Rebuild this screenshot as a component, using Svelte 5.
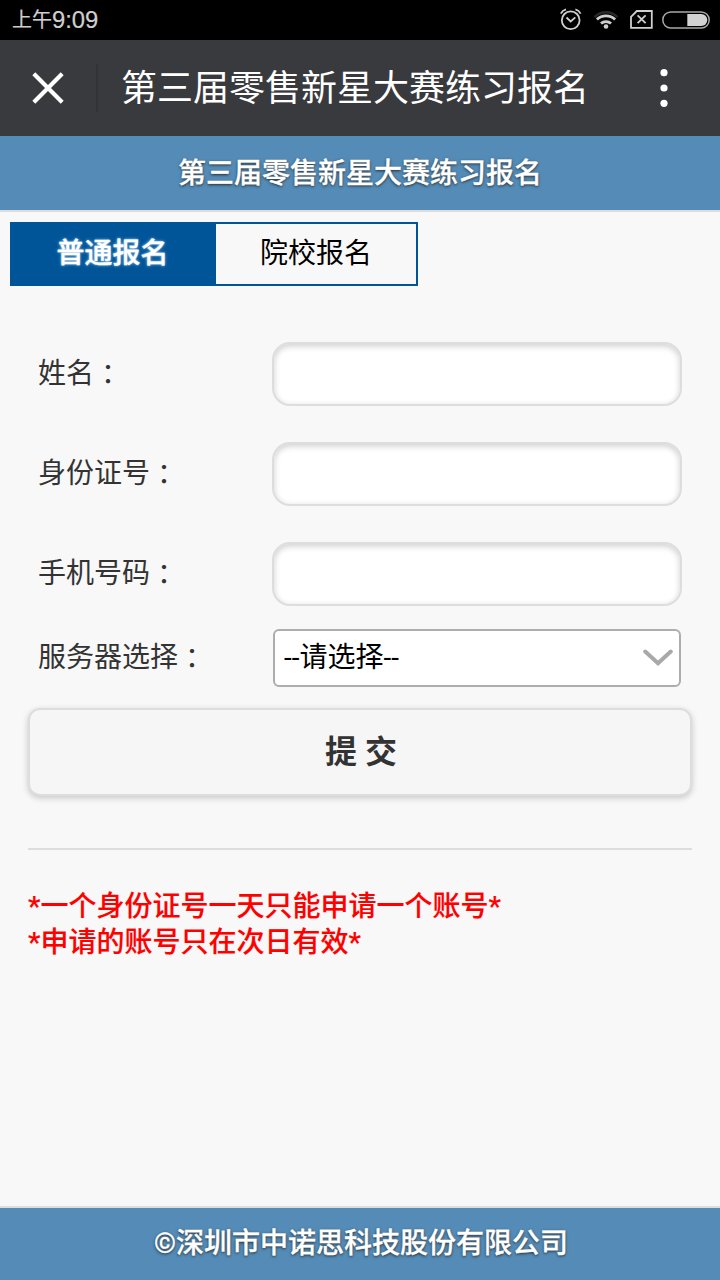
<script>
  const fields = ['姓名', '身份证号', '手机号码'];
  const notes = ['*一个身份证号一天只能申请一个账号*', '*申请的账号只在次日有效*'];
</script>

<div class="screen">
  <div class="status">
    <div class="time"><span>上午</span><span class="digits">9:09</span></div>
    <svg class="icons" width="160" height="40" viewBox="560 0 160 40" fill="none" stroke="#cfcfcf" stroke-width="1.8">
      <circle cx="570.7" cy="20.3" r="8.9" />
      <path d="M566.5 17.5l4.2 4 4.6-4.2M560.8 13.6q1.7-3.3 5.2-4.2M580.6 13.6q-1.7-3.3-5.2-4.2" />
      <g stroke-width="2.8">
        <path d="M594.5 17.2a16 16 0 0 1 23 0" stroke="#292929" stroke-width="2.4" />
        <path d="M596.9 19.6a13 13 0 0 1 18.2 0" />
        <path d="M601 23.6a7.2 7.2 0 0 1 10 0" />
      </g>
      <circle cx="606" cy="26.5" r="2.3" fill="#cfcfcf" stroke="none" />
      <path d="M636.8 11h15v16.8h-20.8v-11zM637.6 15.4l8 7.8M645.6 15.4l-8 7.8" />
      <rect x="662.8" y="12" width="46.4" height="16" rx="8" stroke="#a8a8a8" stroke-width="1.5" />
      <path d="M687.3 14h14a6 6 0 0 1 0 12h-14z" fill="#d3d3d3" stroke="none" />
    </svg>
  </div>

  <div class="appbar">
    <svg class="close" width="32" height="32" viewBox="0 0 32 32"><path d="M1.8 1.8l28.4 28.4M30.2 1.8L1.8 30.2" stroke="#fff" stroke-width="4.2" /></svg>
    <i class="sep"></i>
    <span class="apptitle">第三届零售新星大赛练习报名</span>
    <svg class="more" width="8" height="40" viewBox="0 0 8 40" fill="#fff"><circle cx="4" cy="4.7" r="3.6" /><circle cx="4" cy="20" r="3.6" /><circle cx="4" cy="35.3" r="3.6" /></svg>
  </div>

  <header>第三届零售新星大赛练习报名</header>

  <main>
    <nav>
      <span class="tab active">普通报名</span>
      <span class="tab">院校报名</span>
    </nav>

    <form>
      {#each fields as name}
        <div class="row">
          <label for={name}>{name}<span class="colon">：</span></label>
          <input id={name} type="text" />
        </div>
      {/each}
      <div class="row server">
        <span class="label">服务器选择<span class="colon">：</span></span>
        <div class="select">
          <span>--请选择--</span>
          <svg width="30" height="18" viewBox="0 0 30 18"><path d="M2.2 2.5L15 14.3 27.8 2.5" fill="none" stroke="#a9a9a9" stroke-width="4" stroke-linecap="round" /></svg>
        </div>
      </div>
      <button type="button">提 交</button>
    </form>

    <div class="notes">
      {#each notes as note}<p>{note}</p>{/each}
    </div>
  </main>

  <footer>©深圳市中诺思科技股份有限公司</footer>
</div>

<style>
  .screen {
    width: 720px;
    height: 1280px;
    display: flex;
    flex-direction: column;
    background: #f8f8f8;
    color: #333;
    font-family: Roboto, 'Noto Sans CJK SC', sans-serif;
    font-size: 28px;
    overflow: hidden;
  }
  .screen * { box-sizing: border-box; }
  .status {
    height: 40px;
    flex: none;
    display: flex;
    justify-content: space-between;
    background: #000;
    color: #cfcfcf;
    padding-left: 12px;
  }
  .time { display: flex; font-size: 20px; line-height: 40px; -webkit-text-stroke: .2px; }
  .digits { font-family: 'Liberation Sans', sans-serif; font-size: 23.8px; line-height: 39px; }
  .appbar {
    height: 96px;
    flex: none;
    display: flex;
    align-items: center;
    padding: 0 52px 0 32px;
    background: #393a3e;
    color: #fff;
  }
  .close { flex: none; }
  .sep { width: 2px; height: 48px; margin: 0 23px 0 32px; background: #323337; }
  .apptitle { flex: 1; font-size: 36px; line-height: 96px; padding-top: 2px; white-space: nowrap; }
  header, footer {
    flex: none;
    text-align: center;
    background: #548cb7;
    color: #fff;
    font-weight: 500;
    -webkit-text-stroke: .3px;
    text-shadow: 0 1px 3px #222;
    white-space: nowrap;
  }
  header { height: 76px; line-height: 75px; border-bottom: 2px solid #ddd; }
  footer { height: 74px; line-height: 71px; border-top: 2px solid #ddd; padding-left: 2px; }
  main { flex: 1; padding: 10px 28px 0 10px; }
  nav { display: flex; width: 408px; height: 64px; border: 2px solid #005599; line-height: 59px; text-align: center; color: #000; }
  .tab { width: 200px; }
  .tab.active { width: 204px; padding-right: 3px; background: #005599; color: #fff; font-weight: 500; -webkit-text-stroke: .3px; text-shadow: 0 0 3px #bfe4ff; }
  form { margin: 38px 0 0 18px; padding-bottom: 52px; border-bottom: 2px solid #ddd; }
  .row { display: flex; align-items: center; height: 100px; padding: 0 10px; }
  label, .label { width: 234px; line-height: 40px; padding-bottom: 3px; white-space: nowrap; }
  .colon { position: relative; top: 2px; font-family: 'Noto Sans CJK TC', sans-serif; }
  input {
    width: 410px;
    height: 64px;
    margin: 0;
    border: 2px solid #ddd;
    border-radius: 18px;
    background: #fff;
    box-shadow: inset 0 2px 6px rgba(0, 0, 0, .2);
    outline: none;
  }
  .server { height: 68px; }
  .select {
    width: 408px;
    height: 58px;
    margin-left: 1px;
    display: flex;
    align-items: center;
    justify-content: space-between;
    padding: 0 6px 0 9px;
    border: 2px solid #adadad;
    border-radius: 6px;
    background: #fff;
    color: #000;
    line-height: 52px;
  }
  .select span { padding-bottom: 1px; }
  button {
    display: block;
    width: 664px;
    height: 88px;
    margin: 16px 0 0;
    padding: 0 0 7px 2px;
    border: 2px solid #ddd;
    border-radius: 12px;
    background: #f6f6f6;
    box-shadow: 0 2px 6px rgba(0, 0, 0, .2);
    color: #333;
    font: 700 32px Roboto, 'Noto Sans CJK SC', sans-serif;
  }
  .notes { margin: 39px 0 0 18px; color: #f00; font-weight: 500; -webkit-text-stroke: .15px; }
  p { margin: 0; line-height: 36px; }
</style>
